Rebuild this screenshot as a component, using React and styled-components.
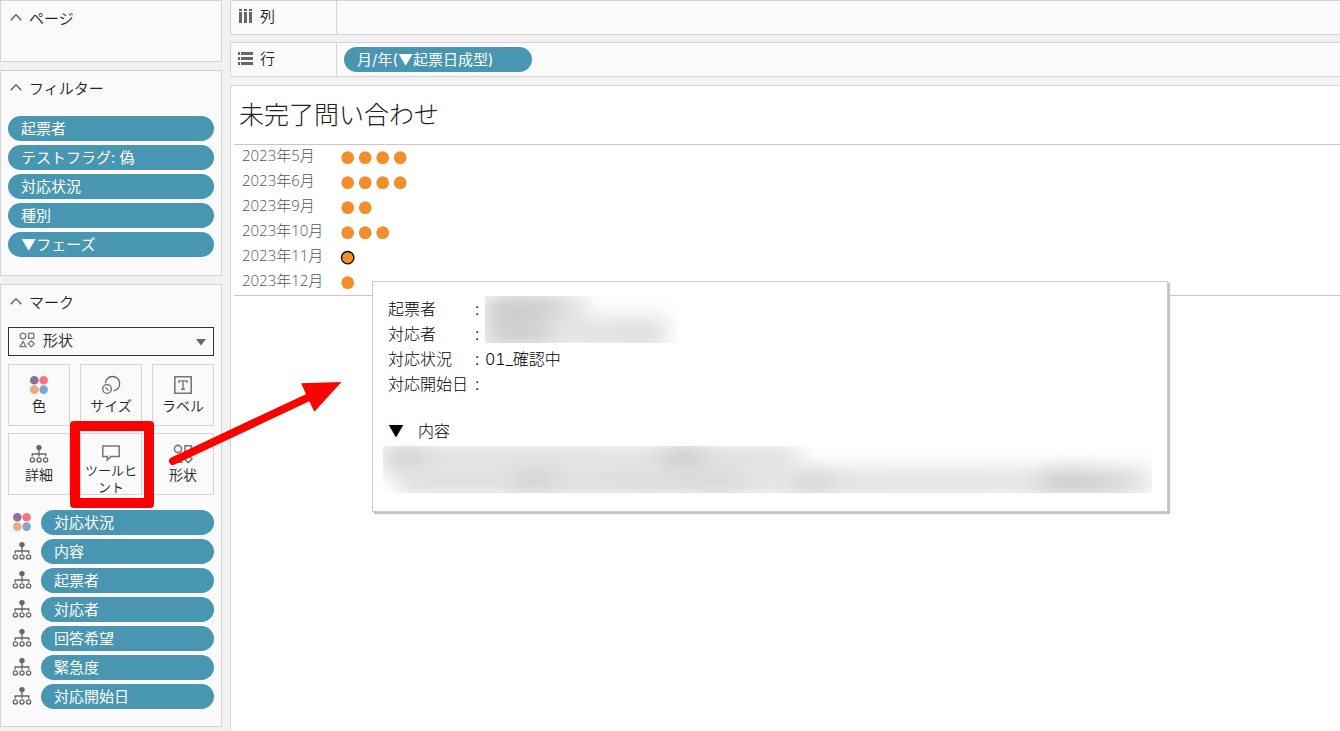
import React from 'react';
import styled, { createGlobalStyle } from 'styled-components';

const GlobalStyle = createGlobalStyle`
    * {
        box-sizing: border-box;
    }

    body {
        margin: 0;
        background: #f2f2f2;
        color: #222;
        font-family: Inter, "Noto Sans CJK JP", sans-serif;
        font-size: 15px;
        font-variant-numeric: tabular-nums;
    }

    button, select {
        font-family: inherit;
        color: inherit;
    }

    svg {
        flex-shrink: 0;
    }
`;

const Page = styled.div`
    display: grid;
    grid-template-columns: 222px minmax(0, 1fr);
    column-gap: 8px;
    min-height: 100vh;
`;

const Sidebar = styled.aside`
    display: flex;
    flex-direction: column;
    gap: 8px;
`;

const Card = styled.section`
    background: #fafafa;
    border: 1px solid #d4d4d4;
    padding: 0 7px ${props => props.$bottom || 0}px;
`;

const CardTitle = styled.h2`
    display: flex;
    align-items: center;
    gap: 7px;
    height: 36px;
    margin: 0;
    padding-left: 2px;
    font-size: 15px;
    font-weight: 350;
    line-height: 24px;

    svg {
        margin-bottom: 2px;
    }
`;

const EmptyShelf = styled.div`
    height: 24px;
`;

const PillList = styled.ul`
    display: flex;
    flex-direction: column;
    gap: 4px;
    margin: ${props => props.$top}px 0 0;
    padding: 0;
    list-style: none;
`;

const Pill = styled.button`
    display: block;
    width: ${props => props.$width || '100%'};
    height: 25px;
    padding: 0 13px;
    border: 0;
    border-radius: 13px;
    background: #4996b2;
    color: #fff;
    font-size: 15px;
    line-height: 22px;
    text-align: left;
    white-space: nowrap;
`;

const MarkRow = styled.li`
    display: grid;
    grid-template-columns: 27px 1fr;
    column-gap: 6px;
    justify-items: center;

    svg {
        margin-top: 2px;
    }
`;

const MarkType = styled.label`
    display: flex;
    align-items: center;
    height: 29px;
    margin-top: 6px;
    padding: 0 7px 0 10px;
    border: 1px solid #333;

    select {
        flex: 1;
        height: 27px;
        padding: 0 8px 2px;
        border: 0;
        outline: 0;
        appearance: none;
        background: transparent;
        font-size: 15px;
        font-weight: 350;
    }
`;

const MarkTypeIcon = styled.span`
    display: flex;
    padding-bottom: 4px;
`;

const Tools = styled.div`
    display: grid;
    grid-template-columns: repeat(3, 1fr);
    gap: 7px 10px;
    margin-top: 8px;
`;

const ToolCell = styled.div`
    position: relative;
`;

const Tool = styled.button`
    display: flex;
    flex-direction: column;
    align-items: center;
    gap: ${props => (props.$wrap ? 0 : 2)}px;
    width: 100%;
    height: 62px;
    padding: 10px ${props => (props.$wrap ? 4 : 0)}px 0;
    border: 1px solid #d4d4d4;
    background: #fafafa;
    font-size: ${props => (props.$wrap ? 13 : 14)}px;
    font-weight: 350;
    line-height: ${props => (props.$wrap ? 17 : 18)}px;
    word-break: break-all;
`;

// red frame and arrow drawn over the tooltip button
const Callout = styled.svg`
    position: absolute;
    left: -10px;
    top: -55px;
    z-index: 3;
    pointer-events: none;
`;

const Main = styled.main`
    display: flex;
    flex-direction: column;
    min-width: 0;
`;

const Shelf = styled.div`
    display: grid;
    grid-template-columns: 106px 1fr;
    height: 35px;
    margin-bottom: 7px;
    border: 1px solid #d4d4d4;
    border-right: 0;
    background: #fafafa;
`;

const ShelfName = styled.div`
    display: flex;
    align-items: center;
    gap: 7px;
    padding: 0 7px 4px;
    border-right: 1px solid #d4d4d4;
    font-weight: 350;
`;

const ShelfDrop = styled.div`
    display: flex;
    align-items: center;
    padding-left: 7px;
`;

const Sheet = styled.section`
    position: relative;
    flex: 1;
    margin-top: 1px;
    padding-left: 3px;
    border: 1px solid #d4d4d4;
    border-width: 1px 0 0 1px;
    background: #fff;
`;

const SheetTitle = styled.h1`
    margin: 0;
    padding: 9px 5px;
    font-size: 25px;
    font-weight: 300;
    line-height: 40px;
`;

const View = styled.table`
    width: 100%;
    border-top: 1px solid #c8c8c8;
    border-bottom: 1px solid #c8c8c8;
    border-spacing: 0;

    th {
        width: 100px;
        height: 25px;
        padding: 0 0 4px 8px;
        color: #555;
        font-family: "Open Sans", "Noto Sans CJK JP", sans-serif;
        font-size: 15px;
        font-weight: 300;
        line-height: 21px;
        text-align: left;
        white-space: nowrap;
    }

    td {
        padding: 0;
    }

    svg {
        display: block;
    }
`;

const Tooltip = styled.div`
    position: absolute;
    left: 141px;
    right: 172px;
    top: 195px;
    padding: 14px 15px 18px;
    border: 1px solid #ccc;
    background: #fff;
    box-shadow: 2px 2px 1px #c4c4c4;
    color: #000;
    font-size: 16px;
    font-weight: 300;
    line-height: 27px;
`;

const Fields = styled.dl`
    display: grid;
    grid-template-columns: 87px 10px 1fr;
    grid-auto-rows: 25px;
    margin: 0;

    dt {
        grid-column: 1;
    }

    dd {
        grid-column: 3;
        margin: 0;
    }
`;

const Colon = styled.span`
    grid-column: 2;
`;

// names stay unreadable: two smeared lines clipped to a box
const HiddenPeople = styled.dd`
    grid-row: 1 / 3;
    width: 192px;
    height: 47px;
    overflow: hidden;

    &::before, &::after {
        content: "";
        display: block;
        height: 24px;
        filter: blur(12px);
    }

    &::before {
        width: 100px;
        margin-top: 1px;
        background: linear-gradient(90deg, #bcbcbc 50%, #dcdcdc);
    }

    &::after {
        width: 180px;
        background: linear-gradient(90deg, #c0c0c0 30%, #dedede 40%, #cecece);
    }
`;

const Section = styled.h3`
    display: flex;
    gap: 14px;
    margin: 22px 0 1px;
    font-size: 16px;
    font-weight: 300;
    line-height: 27px;
`;

const HiddenBody = styled.div`
    height: 47px;
    margin-left: -5px;
    overflow: hidden;

    &::before, &::after {
        content: "";
        display: block;
        height: 24px;
        filter: blur(11px);
    }

    &::before {
        width: 414px;
        background: linear-gradient(90deg, #c8c8c8 8%, #dcdcdc 12%, #dedede 66%, #c0c0c0 70%, #c0c0c0 74%, #dcdcdc 80%);
    }

    &::after {
        margin-left: 16px;
        background: linear-gradient(90deg, #d8d8d8 14%, #c4c4c4 18%, #d8d8d8 22%, #d0d0d0 44%, #e2e2e2 50%, #c8c8c8 55%, #dcdcdc 59%, #dedede 84%, #c0c0c0 87%, #c4c4c4 92%, #e0e0e0);
    }
`;

const Chevron = () => (
    <svg width="12" height="12" viewBox="0 0 12 12" fill="none" stroke="#666" strokeWidth="1.5">
        <path d="M.7 8.2 6 2.8l5.3 5.4" />
    </svg>
);

const ColorIcon = () => (
    <svg width="20" height="20" viewBox="0 0 20 20">
        <circle cx="5.3" cy="5.3" r="4.3" fill="#88719a" />
        <circle cx="14.6" cy="5.3" r="4.3" fill="#fb7185" />
        <circle cx="5.3" cy="14.6" r="4.3" fill="#f2a77c" />
        <circle cx="14.6" cy="14.6" r="4.3" fill="#82a6cd" />
    </svg>
);

const SizeIcon = () => (
    <svg width="20" height="20" viewBox="0 0 20 20" fill="none" stroke="#666" strokeWidth="1.3">
        <path d="M4.3 8.3A7.2 7.2 0 1 1 12.6 15.8" />
        <circle cx="6" cy="14" r="4.3" />
        <path d="m4.4 12.4 3.2 3.2" />
    </svg>
);

const LabelIcon = () => (
    <svg width="20" height="20" viewBox="0 0 20 20" fill="none" stroke="#777" strokeWidth="1.6">
        <path d="M1.8 1.8h16.4v16.4H1.8z" />
        <path d="M6 8V5.9h8V8M10 6v8.3M8 14.3h4" strokeWidth="1.4" />
    </svg>
);

const DetailIcon = () => (
    <svg width="20" height="20" viewBox="0 0 20 20" fill="none" stroke="#666" strokeWidth="1.3">
        <circle cx="10" cy="3.6" r="2.7" fill="#666" stroke="none" />
        <path d="M10 5v7.5M3.2 12.5V10h13.6v2.5" />
        <circle cx="3.4" cy="15.9" r="2.1" />
        <circle cx="10" cy="15.9" r="2.1" />
        <circle cx="16.6" cy="15.9" r="2.1" />
    </svg>
);

const TooltipIcon = () => (
    <svg width="20" height="18" viewBox="0 0 20 18" fill="none" stroke="#777" strokeWidth="1.5">
        <path d="M1.8 2h16.4v10.6H9.8L6.3 16v-3.4H1.8z" />
    </svg>
);

const ShapeIcon = ({ size = 20 }) => (
    <svg width={size} height={size} viewBox="0 0 20 20" fill="none" stroke="#777" strokeWidth="1.6">
        <circle cx="5" cy="5" r="3.6" />
        <path d="M12 1.7h6.4v6.4H12zM5 11.8l3.7 6.4H1.3zM15.2 11l3.8 3.8-3.8 3.8-3.8-3.8z" />
    </svg>
);

const ColumnsIcon = () => (
    <svg width="15" height="16" viewBox="0 0 15 16" fill="#666">
        <path d="M1 1h3v2H1zM6 1h3v2H6zM11 1h3v2h-3zM1 4h3v11H1zM6 4h3v11H6zM11 4h3v11h-3z" />
    </svg>
);

const RowsIcon = () => (
    <svg width="15" height="16" viewBox="0 0 15 16" fill="#666">
        <path d="M0 2h2v3H0zM3 2h12v3H3zM0 7h2v3H0zM3 7h12v3H3zM0 12h2v3H0zM3 12h12v3H3z" />
    </svg>
);

const filters = ['起票者', 'テストフラグ: 偽', '対応状況', '種別', '▼フェーズ'];

const marks = ['対応状況', '内容', '起票者', '対応者', '回答希望', '緊急度', '対応開始日'];

const months = [
    { label: '2023年5月', count: 4 },
    { label: '2023年6月', count: 4 },
    { label: '2023年9月', count: 2 },
    { label: '2023年10月', count: 3 },
    { label: '2023年11月', count: 1, selected: true },
    { label: '2023年12月', count: 1 },
];

const Dots = ({ count, selected }) => (
    <svg width="90" height="25" viewBox="0 0 90 25">
        {Array.from({ length: count }, (_, i) => (
            <circle
                key={i}
                cx={13.7 + i * 17.5}
                cy="12.7"
                r={selected ? 6.2 : 6.4}
                fill="#f28e2b"
                stroke={selected ? '#111' : 'none'}
                strokeWidth="1.4"
            />
        ))}
    </svg>
);

const App = () => (
    <Page>
        <GlobalStyle />
        <Sidebar>
            <Card>
                <CardTitle><Chevron />ページ</CardTitle>
                <EmptyShelf />
            </Card>
            <Card $bottom={18}>
                <CardTitle><Chevron />フィルター</CardTitle>
                <PillList $top={9}>
                    {filters.map(name => (
                        <li key={name}><Pill>{name}</Pill></li>
                    ))}
                </PillList>
            </Card>
            <Card $bottom={17}>
                <CardTitle><Chevron />マーク</CardTitle>
                <MarkType>
                    <MarkTypeIcon><ShapeIcon size={16} /></MarkTypeIcon>
                    <select aria-label="マークタイプ" defaultValue="shape">
                        <option value="shape">形状</option>
                    </select>
                    <svg width="10" height="8" viewBox="0 0 10 8" fill="#666">
                        <path d="M0 1h10L5 7.5z" />
                    </svg>
                </MarkType>
                <Tools>
                    <Tool><ColorIcon />色</Tool>
                    <Tool><SizeIcon />サイズ</Tool>
                    <Tool><LabelIcon />ラベル</Tool>
                    <Tool><DetailIcon />詳細</Tool>
                    <ToolCell>
                        <Tool $wrap><TooltipIcon />ツールヒント</Tool>
                        <Callout width="275" height="132" viewBox="0 0 275 132" fill="#f00">
                            <path
                                fillRule="evenodd"
                                d="M4 43h76a4 4 0 0 1 4 4v79a4 4 0 0 1-4 4H4a4 4 0 0 1-4-4V47a4 4 0 0 1 4-4zM10 53v67h64V53z"
                            />
                            <path d="M103 83 237 20" stroke="#f00" strokeWidth="8" strokeLinecap="round" />
                            <path d="M271.5 4 231 5.3l13.3 28.5z" />
                        </Callout>
                    </ToolCell>
                    <Tool><ShapeIcon />形状</Tool>
                </Tools>
                <PillList $top={15}>
                    {marks.map((name, i) => (
                        <MarkRow key={name}>
                            {i === 0 ? <ColorIcon /> : <DetailIcon />}
                            <Pill>{name}</Pill>
                        </MarkRow>
                    ))}
                </PillList>
            </Card>
        </Sidebar>
        <Main>
            <Shelf>
                <ShelfName><ColumnsIcon />列</ShelfName>
                <ShelfDrop />
            </Shelf>
            <Shelf>
                <ShelfName><RowsIcon />行</ShelfName>
                <ShelfDrop>
                    <Pill $width="188px">月/年(▼起票日成型)</Pill>
                </ShelfDrop>
            </Shelf>
            <Sheet>
                <SheetTitle>未完了問い合わせ</SheetTitle>
                <View>
                    <tbody>
                        {months.map(month => (
                            <tr key={month.label}>
                                <th scope="row">{month.label}</th>
                                <td><Dots count={month.count} selected={month.selected} /></td>
                            </tr>
                        ))}
                    </tbody>
                </View>
                <Tooltip role="tooltip">
                    <Fields>
                        <dt>起票者</dt>
                        <Colon>:</Colon>
                        <HiddenPeople />
                        <dt>対応者</dt>
                        <Colon>:</Colon>
                        <dt>対応状況</dt>
                        <Colon>:</Colon>
                        <dd>01_確認中</dd>
                        <dt>対応開始日</dt>
                        <Colon>:</Colon>
                    </Fields>
                    <Section><span>▼</span>内容</Section>
                    <HiddenBody />
                </Tooltip>
            </Sheet>
        </Main>
    </Page>
);

export default App;
